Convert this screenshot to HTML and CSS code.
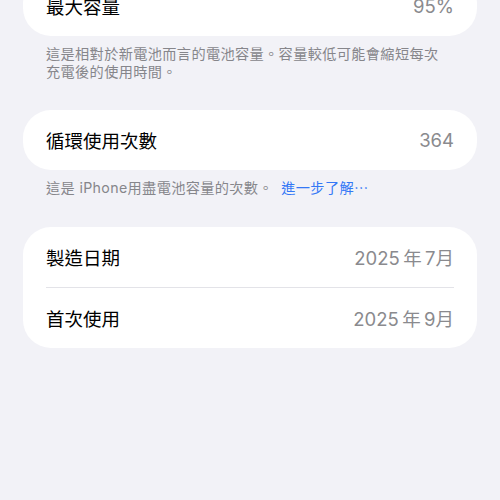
FILE: index.html
```html
<!DOCTYPE html>
<html lang="zh-Hant">
<head>
<meta charset="utf-8">
<link rel="stylesheet" href="styles.css">
</head>
<body>
<main class="page">
  <section class="card first">
    <div class="row"><span class="label">最大容量</span><span class="value">95%</span></div>
  </section>
  <p class="note">這是相對於新電池而言的電池容量。容量較低可能會縮短每次充電後的使用時間。</p>

  <section class="card">
    <div class="row"><span class="label">循環使用次數</span><span class="value">364</span></div>
  </section>
  <p class="note">這是 iPhone用盡電池容量的次數。 <span class="link">進一步了解⋯</span></p>

  <section class="card">
    <div class="row"><span class="label">製造日期</span><span class="value">2025&thinsp;年&thinsp;7月</span></div>
    <div class="divider"></div>
    <div class="row"><span class="label">首次使用</span><span class="value">2025&thinsp;年&thinsp;9月</span></div>
  </section>
</main>
</body>
</html>
```

FILE: styles.css
```css
html, body {
  margin: 0;
  padding: 0;
  background: #f2f2f7;
}
body {
  font-family: "Inter", "Noto Sans CJK TC", sans-serif;
  -webkit-font-smoothing: antialiased;
}
.page {
  display: flex;
  flex-direction: column;
  margin-top: -24px;
  padding: 0 23px;
}
.card {
  background: #ffffff;
  border-radius: 28px;
  padding: 0 23px;
  display: flex;
  flex-direction: column;
}
.row {
  height: 60px;
  display: flex;
  align-items: center;
  justify-content: space-between;
}
.label {
  font-size: 18.5px;
  color: #000000;
}
.value {
  font-size: 18.5px;
  color: #8a8a8e;
}
.divider {
  height: 1px;
  background: #e3e3e8;
}
.note {
  margin: 9px 0 30px;
  padding: 0 35px 0 23px;
  font-size: 14.2px;
  line-height: 17.5px;
  color: #86868b;
  letter-spacing: 0.35px;
}
.link {
  color: #3478f6;
  margin-left: 4px;
}
```
